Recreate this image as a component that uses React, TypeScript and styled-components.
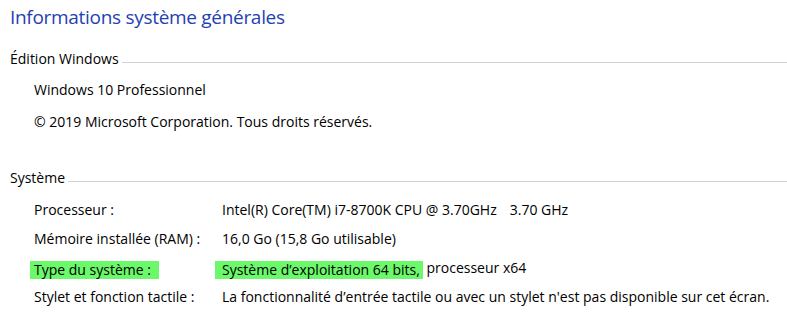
import React from "react";
import styled, { createGlobalStyle } from "styled-components";

const GlobalStyle = createGlobalStyle`
  html, body {
    margin: 0;
    padding: 0;
    background: #ffffff;
  }
  body {
    font-family: "Open Sans", "Noto Sans", "Liberation Sans", sans-serif;
    color: #000000;
  }
`;

const Page = styled.div`
  width: 787px;
  height: 316px;
  padding-left: 10px;
  box-sizing: border-box;
  overflow: hidden;
`;

const Title = styled.h1`
  margin: 3px 0 0;
  font-size: 19px;
  font-weight: 400;
  line-height: 28px;
  letter-spacing: -0.3px;
  color: #1f3fb4;
`;

const Section = styled.section<{ $gap: number }>`
  margin-top: ${({ $gap }) => $gap}px;
`;

const SectionHeader = styled.div`
  display: flex;
  align-items: flex-start;
  font-size: 14px;
  line-height: 20px;
  white-space: nowrap;

  &::after {
    content: "";
    flex: 1;
    height: 1px;
    margin-top: 13px;
    margin-left: 3px;
    background: #d3d3d3;
  }
`;

const Lines = styled.div`
  margin-top: 5px;
  padding-left: 24px;
`;

const Line = styled.div`
  font-size: 14px;
  line-height: 32px;
  white-space: nowrap;
`;

const Grid = styled.div`
  margin-top: 7px;
  padding-left: 24px;
  display: grid;
  grid-template-columns: 188px auto;
  grid-auto-rows: 29px;
  font-size: 14px;
  line-height: 29px;
  white-space: nowrap;
`;

const Label = styled.div``;

const Value = styled.div``;

const Gap = styled.span`
  display: inline-block;
  width: 13px;
`;

const Mark = styled.span<{ $left: number; $right: number }>`
  display: inline-block;
  line-height: 18px;
  vertical-align: -2px;
  background: #6bf86b;
  margin-left: -${({ $left }) => $left}px;
  padding-left: ${({ $left }) => $left}px;
  padding-right: ${({ $right }) => $right}px;
`;

type Row = {
  label: string;
  value: React.ReactNode;
  marked?: boolean;
};

const rows: Row[] = [
  {
    label: "Processeur :",
    value: (
      <>
        Intel(R) Core(TM) i7-8700K CPU @ 3.70GHz<Gap />3.70 GHz
      </>
    ),
  },
  { label: "Mémoire installée (RAM) :", value: "16,0 Go (15,8 Go utilisable)" },
  {
    label: "Type du système :",
    marked: true,
    value: (
      <>
        <Mark $left={7} $right={3}>Système d’exploitation 64 bits,</Mark> processeur x64
      </>
    ),
  },
  {
    label: "Stylet et fonction tactile :",
    value:
      "La fonctionnalité d’entrée tactile ou avec un stylet n'est pas disponible sur cet écran.",
  },
];

export default function App() {
  return (
    <>
      <GlobalStyle />
      <Page>
        <Title>Informations système générales</Title>

        <Section $gap={18}>
          <SectionHeader>Édition Windows</SectionHeader>
          <Lines>
            <Line>Windows 10 Professionnel</Line>
            <Line>© 2019 Microsoft Corporation. Tous droits réservés.</Line>
          </Lines>
        </Section>

        <Section $gap={30}>
          <SectionHeader>Système</SectionHeader>
          <Grid>
            {rows.map((row) => (
              <React.Fragment key={row.label}>
                <Label>
                  {row.marked ? (
                    <Mark $left={4} $right={8}>{row.label}</Mark>
                  ) : (
                    row.label
                  )}
                </Label>
                <Value>{row.value}</Value>
              </React.Fragment>
            ))}
          </Grid>
        </Section>
      </Page>
    </>
  );
}
